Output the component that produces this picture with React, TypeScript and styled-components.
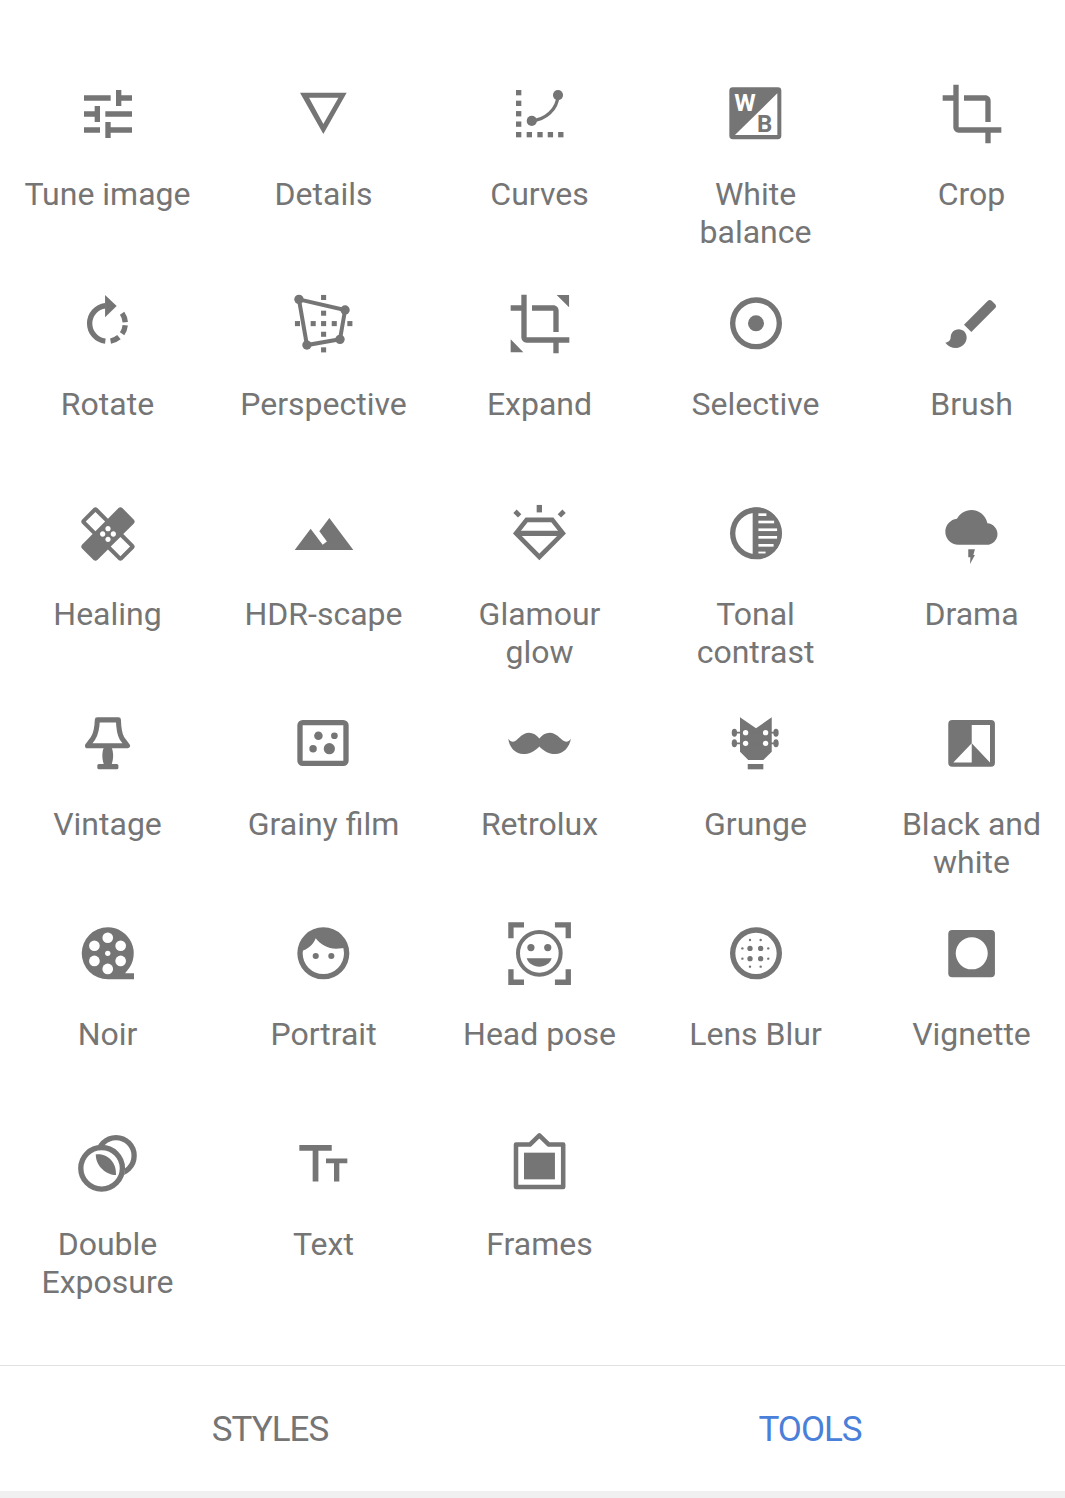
import React from 'react';
import styled, { createGlobalStyle } from 'styled-components';

const GlobalStyle = createGlobalStyle`
  html, body {
    margin: 0;
    padding: 0;
    background: #ffffff;
  }
  body {
    font-family: Roboto, "Liberation Sans", sans-serif;
  }
`;

const Page = styled.div`
  width: 1065px;
  height: 1498px;
  overflow: hidden;
  background: #ffffff;
  display: flex;
  flex-direction: column;
`;

const ToolGrid = styled.div`
  width: 1080px;
  margin-left: -0.5px;
  display: grid;
  grid-template-columns: repeat(5, 216px);
  grid-auto-rows: 210px;
  padding: 82px 0 23px;
`;

const ToolCell = styled.div`
  display: flex;
  flex-direction: column;
  align-items: center;
  color: #757575;
`;

const ToolIcon = styled.svg`
  display: block;
  width: 64px;
  height: 64px;
  flex: none;
  fill: currentColor;
  overflow: visible;
`;

const ToolLabel = styled.div`
  margin-top: 29px;
  max-width: 176px;
  font-size: 32px;
  line-height: 38px;
  text-align: center;
  white-space: normal;
`;

const WideLabel = styled(ToolLabel)`
  max-width: 150px;
`;

const TabBar = styled.div`
  width: 1080px;
  height: 125px;
  flex: none;
  display: grid;
  grid-template-columns: repeat(2, 540px);
  border-top: 1px solid #e2e2e2;
  margin-right: -15px;
`;

const Tab = styled.div<{ $active?: boolean }>`
  display: flex;
  align-items: center;
  justify-content: center;
  padding-top: 2px;
  font-size: 35px;
  letter-spacing: -1px;
  color: ${props => (props.$active ? '#4a80d9' : '#757575')};
`;

const BottomStrip = styled.div`
  flex: 1;
  background: #f0f0f0;
`;

const BadgeLetter = styled.text<{ $size: number }>`
  font-family: Roboto, "Liberation Sans", sans-serif;
  font-weight: 700;
  font-size: ${props => props.$size}px;
`;

const line = { fill: 'none', stroke: 'currentColor', strokeWidth: 2 };
const WHITE = '#ffffff';

const CROP_PATH =
  'M17 15h2V7c0-1.1-.9-2-2-2H9v2h8v8zM7 17V1H5v4H1v2h4v10c0 1.1.9 2 2 2h10v4h2v-4h4v-2H7z';

const icons: Record<string, React.ReactNode> = {
  tune: (
    <path d="M3 17v2h6v-2H3zM3 5v2h10V5H3zm10 16v-2h8v-2h-8v-2h-2v6h2zM7 9v2H3v2h4v2h2V9H7zm14 4v-2H11v2h10zm-6-4h2V7h4V5h-4V3h-2v6z" />
  ),
  details: (
    <path fillRule="evenodd" d="M3 4h17.5l-8.75 15.5zM6.4 5.9h11l-5.65 9.85z" />
  ),
  curves: (
    <>
      {[3, 7, 10.9, 14.8, 18.75].map(y => (
        <rect key={y} x="3" y={y} width="2" height="2" />
      ))}
      {[7, 11, 14.9, 18.8].map(x => (
        <rect key={x} x={x} y="18.75" width="2" height="2" />
      ))}
      <circle cx="8.9" cy="14.6" r="1.9" />
      <circle cx="18.75" cy="4.9" r="1.9" />
      <path {...line} strokeWidth={1.2} d="M8.9 14.6C14 14 18.5 10.5 18.75 4.9" />
    </>
  ),
  whiteBalance: (
    <>
      <rect x="2" y="2" width="19.5" height="19.5" rx="1.3" />
      <path fill={WHITE} d="M20 4.25V19.9H4.1z" />
      <BadgeLetter $size={9.2} x="3.8" y="10.75" fill={WHITE}>W</BadgeLetter>
      <BadgeLetter $size={9} x="12.4" y="18.6">B</BadgeLetter>
    </>
  ),
  crop: <path d={CROP_PATH} />,
  rotate: (
    <>
      <path d="M10.9 1.1l4.35 4.15-4.35 4.25z" />
      <path {...line} d="M11 5.15a6.7 6.7 0 0 0 0 13.3" />
      <path {...line} d="M17.29 7.96A6.7 6.7 0 0 1 18.48 11.33" />
      <path {...line} d="M18.46 12.5A6.7 6.7 0 0 1 17.29 15.64" />
      <path {...line} d="M16.1 16.93A6.7 6.7 0 0 1 12.96 18.4" />
    </>
  ),
  perspective: (
    <>
      <path {...line} strokeWidth={1.5} d="M2.6 2.75L19.9 6.75 18 17.75 5.6 19.9z" />
      <circle cx="2.6" cy="2.75" r="1.75" />
      <circle cx="19.9" cy="6.75" r="1.75" />
      <circle cx="18" cy="17.75" r="1.75" />
      <circle cx="5.6" cy="19.9" r="1.75" />
      {[1.1, 7, 10.9, 14.9, 20.75].map(y => (
        <rect key={y} x="10.9" y={y} width="1.9" height="1.9" />
      ))}
      {[1.1, 7, 14.9, 20.75].map(x => (
        <rect key={x} x={x} y="10.9" width="1.9" height="1.9" />
      ))}
    </>
  ),
  expand: (
    <>
      <path d={CROP_PATH} />
      <path d="M18.25 1.1h4.65v4.65zM1 17.75l4.75 4.85H1z" />
    </>
  ),
  selective: (
    <>
      <circle {...line} cx="12" cy="11.75" r="8.75" />
      <circle cx="12" cy="11.75" r="3" />
    </>
  ),
  brush: (
    <path d="M7 14c-1.66 0-3 1.34-3 3 0 1.31-1.16 2-2 2 .92 1.22 2.49 2 4 2 2.21 0 4-1.79 4-4 0-1.66-1.34-3-3-3zm13.71-9.37l-1.34-1.34c-.39-.39-1.02-.39-1.41 0L9 12.25 11.75 15l8.96-8.96c.39-.39.39-1.02 0-1.41z" />
  ),
  healing: (
    <path d="M17.73 12.02l3.98-3.98c.39-.39.39-1.02 0-1.41l-4.34-4.34c-.39-.39-1.02-.39-1.41 0l-3.98 3.98L8 2.29C7.8 2.1 7.55 2 7.29 2c-.25 0-.51.1-.7.29L2.25 6.63c-.39.39-.39 1.02 0 1.41l3.98 3.98L2.25 16c-.39.39-.39 1.02 0 1.41l4.34 4.34c.39.39 1.02.39 1.41 0l3.98-3.98 3.98 3.98c.2.2.45.29.71.29.26 0 .51-.1.71-.29l4.34-4.34c.39-.39.39-1.02 0-1.41l-3.99-3.98zM12 9c.55 0 1 .45 1 1s-.45 1-1 1-1-.45-1-1 .45-1 1-1zm-4.71 1.96L3.66 7.34l3.63-3.63 3.62 3.62-3.62 3.63zM10 13c-.55 0-1-.45-1-1s.45-1 1-1 1 .45 1 1-.45 1-1 1zm2 2c-.55 0-1-.45-1-1s.45-1 1-1 1 .45 1 1-.45 1-1 1zm2-4c.55 0 1 .45 1 1s-.45 1-1 1-1-.45-1-1 .45-1 1-1zm2.66 9.34l-3.63-3.62 3.63-3.63 3.62 3.62-3.62 3.63z" />
  ),
  terrain: <path d="M14 6l-3.75 5 2.85 3.8-1.6 1.2C9.81 13.75 7 10 7 10l-6 8h22L14 6z" />,
  glamour: (
    <>
      <rect x="10.75" y="1.1" width="2" height="2.8" />
      <path d="M3.25 2.85l1.75 1.75-1.25 1.25-1.75-1.75zM20.4 2.85l1.25 1.25-1.75 1.75-1.25-1.25z" />
      <path {...line} strokeWidth={1.7} d="M7 6.7h9.6l4 5.05-8.85 8.85L3 11.75z" />
      <path {...line} d="M3 11.75h17.6" />
    </>
  ),
  tonal: (
    <>
      <path d="M10.75 2.1h1.25a9.65 9.65 0 0 1 0 19.3h-1.25z" />
      <circle {...line} cx="12" cy="11.75" r="8.75" />
      <rect fill={WHITE} x="12.9" y="4.25" width="3" height="1" />
      <rect fill={WHITE} x="12.9" y="7" width="5.9" height="1" />
      <rect fill={WHITE} x="12.9" y="9.9" width="7" height="1" />
      <rect fill={WHITE} x="12.9" y="12.75" width="7" height="1" />
      <rect fill={WHITE} x="12.9" y="15.75" width="5.7" height="1" />
      <rect fill={WHITE} x="12.9" y="18.6" width="2.7" height="0.7" />
    </>
  ),
  drama: (
    <>
      <path
        transform="translate(2 -.26) scale(.815)"
        d="M19.35 10.04C18.67 6.59 15.64 4 12 4 9.11 4 6.6 5.64 5.35 8.04 2.34 8.36 0 10.91 0 14c0 3.31 2.69 6 6 6h13c2.76 0 5-2.24 5-5 0-2.64-2.05-4.78-4.65-4.96z"
      />
      <path d="M10.6 17.75h2.5l-.6 2.15h.6l-1.85 3.35.15-2.5h-.8z" />
    </>
  ),
  vintage: (
    <>
      <path
        {...line}
        strokeWidth={1.9}
        strokeLinejoin="round"
        d="M8 2.95h7.9c.1 3 .2 5 1.3 6.85l2.1 2.85h-15l2.1-2.85C7.6 8 7.9 6 8 2.95z"
      />
      <path d="M10.4 13.5c-.7 1.5-.7 4 0 6h3c.7-2 .7-4.5 0-6z" />
      <rect x="8" y="19.5" width="7.9" height="2" rx=".6" />
    </>
  ),
  grain: (
    <>
      <rect {...line} x="3" y="4" width="17.25" height="15.25" rx="1" />
      <circle cx="9.9" cy="8.9" r="1.6" />
      <circle cx="15.9" cy="8.9" r="1.25" />
      <circle cx="7.9" cy="13.75" r="1.4" />
      <circle cx="14" cy="13.75" r="2.1" />
    </>
  ),
  mustache: (
    <path d="M11.75 9.9C10.8 8.6 9.4 7.75 7.8 7.75 5.5 7.75 4.2 9.8 2.7 10.9 1.7 11.4.8 11 .1 9.9c.3 3.1 2.5 5.85 5.7 5.85 2.6 0 4.6-1.45 5.95-2.85 1.35 1.4 3.35 2.85 5.95 2.85 3.2 0 5.4-2.75 5.9-5.85-.7 1.1-1.6 1.5-2.6 1-1.7-1.1-3-3.15-5.3-3.15-1.6 0-3 .85-3.95 2.15z" />
  ),
  guitar: (
    <>
      <path d="M6 2l6 4.1L17.9 2v12.9L14.75 18h-5.65L6 14.9z" />
      <path d="M3.5 7.4H20v.7H3.5zM3.5 11.4H20v.7H3.5z" />
      <ellipse cx="3.9" cy="7.75" rx="1" ry="1.5" />
      <ellipse cx="3.9" cy="11.75" rx="1" ry="1.5" />
      <ellipse cx="19.5" cy="7.75" rx="1" ry="1.5" />
      <ellipse cx="19.5" cy="11.75" rx="1" ry="1.5" />
      <circle fill={WHITE} cx="8.1" cy="7.75" r="1" />
      <circle fill={WHITE} cx="8.1" cy="11.75" r="1" />
      <circle fill={WHITE} cx="15.6" cy="7.75" r="1" />
      <circle fill={WHITE} cx="15.6" cy="11.75" r="1" />
      <rect x="8.9" y="19.5" width="5.85" height="2" />
    </>
  ),
  blackWhite: (
    <>
      <rect x="3.1" y="3" width="17.5" height="17.5" rx="1.5" />
      <path fill={WHITE} d="M11.9 4.9h6.85v14L11.9 11.75zM5 18.9l6.9-7.15v7.15z" />
    </>
  ),
  reel: (
    <>
      <path d="M11.9 2a9.75 9.75 0 0 1 7.4 16.1l-.9 1.15h3.35v2.25H11.9a9.75 9.75 0 0 1 0-19.5z" />
      <circle fill={WHITE} cx="11.9" cy="5.9" r="2" />
      <circle fill={WHITE} cx="16.75" cy="8.9" r="2" />
      <circle fill={WHITE} cx="16.75" cy="14.6" r="2" />
      <circle fill={WHITE} cx="11.9" cy="17.6" r="2" />
      <circle fill={WHITE} cx="6.9" cy="14.6" r="2" />
      <circle fill={WHITE} cx="6.9" cy="8.9" r="2" />
      <circle fill={WHITE} cx="11.9" cy="11.75" r="1" />
    </>
  ),
  face: (
    <>
      <circle {...line} cx="11.75" cy="11.75" r="8.75" />
      <path d="M3.2 11C5.9 10.3 8 8.5 8.9 6.1 10.6 8.5 13.5 10 16.5 10c1.5 0 3-.1 4.4-.7-1.3-4-4.9-6.8-9.15-6.8C7 2.5 3 6.4 3 11z" />
      <circle cx="8.9" cy="12.75" r="1.15" />
      <circle cx="14.75" cy="12.75" r="1.15" />
    </>
  ),
  headPose: (
    <>
      <path d="M.1.1H6v2H2.1v4h-2zM17.6.1h6v6h-2v-4h-4zM.1 17.75h2v3.85H6v2H.1zM21.6 17.75h2v5.85h-6v-2h4z" />
      <circle {...line} strokeWidth={1.5} cx="11.75" cy="11.75" r="8" />
      <circle cx="8.6" cy="9.6" r="1.35" />
      <circle cx="14.9" cy="9.6" r="1.35" />
      <path d="M7 13.6h9.4c-.6 1.9-2.5 3.15-4.65 3.15-2.25 0-4.15-1.25-4.75-3.15z" />
    </>
  ),
  lensBlur: (
    <>
      <circle {...line} cx="12" cy="11.75" r="8.75" />
      {[9.75, 13.75].flatMap(x =>
        [9.9, 13.75].map(y => <circle key={`${x}-${y}`} cx={x} cy={y} r="1" />)
      )}
      {[9.75, 13.75].flatMap(x =>
        [6.75, 16.75].map(y => <circle key={`${x}-${y}`} cx={x} cy={y} r=".45" />)
      )}
      {[6.9, 16.6].flatMap(x =>
        [9.9, 13.75].map(y => <circle key={`${x}-${y}`} cx={x} cy={y} r=".45" />)
      )}
    </>
  ),
  vignette: (
    <>
      <rect x="3.1" y="3" width="17.5" height="17.75" rx="1.5" />
      <circle fill={WHITE} cx="11.9" cy="11.75" r="6" />
    </>
  ),
  double: (
    <>
      <circle {...line} cx="15" cy="8.9" r="6.8" />
      <circle fill={WHITE} cx="9.6" cy="13.6" r="8.75" />
      <circle {...line} cx="9.6" cy="13.6" r="7.8" />
      <path d="M7.4 8.4c3.6-.5 7.9 2.2 7.6 7.7-3.5 0-7.5-3.1-7.6-7.7z" />
    </>
  ),
  text: (
    <path d="M2.75 4.9H14.9V7h-5v11.6H7.75V7h-5zM12.75 9.9h8v1.85h-3v6.85h-2v-6.85h-3z" />
  ),
  frames: (
    <>
      <path
        {...line}
        strokeWidth={1.7}
        strokeLinejoin="round"
        d="M3 4.7h5.2l3.55-3.4 3.55 3.4h5.4v15.9H3z"
      />
      <rect x="6" y="7.75" width="11.6" height="10" />
    </>
  ),
};

const tools: { label: string; icon: string; narrow?: boolean }[] = [
  { label: 'Tune image', icon: 'tune' },
  { label: 'Details', icon: 'details' },
  { label: 'Curves', icon: 'curves' },
  { label: 'White balance', icon: 'whiteBalance', narrow: true },
  { label: 'Crop', icon: 'crop' },
  { label: 'Rotate', icon: 'rotate' },
  { label: 'Perspective', icon: 'perspective' },
  { label: 'Expand', icon: 'expand' },
  { label: 'Selective', icon: 'selective' },
  { label: 'Brush', icon: 'brush' },
  { label: 'Healing', icon: 'healing' },
  { label: 'HDR-scape', icon: 'terrain' },
  { label: 'Glamour glow', icon: 'glamour', narrow: true },
  { label: 'Tonal contrast', icon: 'tonal', narrow: true },
  { label: 'Drama', icon: 'drama' },
  { label: 'Vintage', icon: 'vintage' },
  { label: 'Grainy film', icon: 'grain' },
  { label: 'Retrolux', icon: 'mustache' },
  { label: 'Grunge', icon: 'guitar' },
  { label: 'Black and white', icon: 'blackWhite', narrow: true },
  { label: 'Noir', icon: 'reel' },
  { label: 'Portrait', icon: 'face' },
  { label: 'Head pose', icon: 'headPose' },
  { label: 'Lens Blur', icon: 'lensBlur' },
  { label: 'Vignette', icon: 'vignette' },
  { label: 'Double Exposure', icon: 'double', narrow: true },
  { label: 'Text', icon: 'text' },
  { label: 'Frames', icon: 'frames' },
];

const App: React.FC = () => {
  return (
    <Page>
      <GlobalStyle />
      <ToolGrid>
        {tools.map(tool => {
          const Label = tool.narrow ? WideLabel : ToolLabel;
          return (
            <ToolCell key={tool.label}>
              <ToolIcon viewBox="0 0 24 24">{icons[tool.icon]}</ToolIcon>
              <Label>{tool.label}</Label>
            </ToolCell>
          );
        })}
      </ToolGrid>
      <TabBar>
        <Tab>STYLES</Tab>
        <Tab $active>TOOLS</Tab>
      </TabBar>
      <BottomStrip />
    </Page>
  );
};

export default App;
